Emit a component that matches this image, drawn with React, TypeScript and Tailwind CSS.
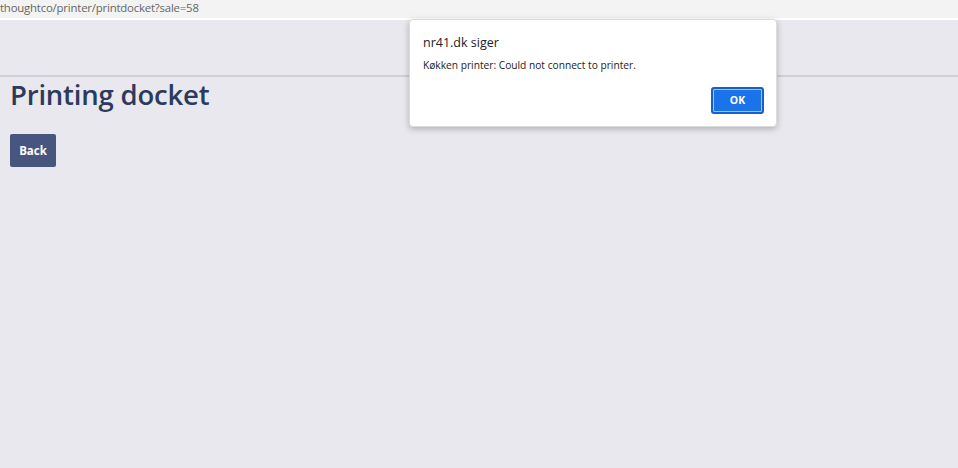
export default function App() {
  return (
    <div className="relative h-[468px] w-[958px] overflow-hidden bg-[#e8e8ee] font-['Open_Sans','Noto_Sans',sans-serif]">
      <div className="h-[20px] border-b-2 border-white bg-[#f3f3f3] text-[11.4px] leading-[16px] tracking-[-0.2px] text-[#666]">
        thoughtco/printer/printdocket?sale=58
      </div>
      <div className="h-[57px] border-b-2 border-[#cfcfd4]" />
      <div className="px-[10px]">
        <h1 className="text-[27.5px] font-semibold leading-[36px] tracking-[-0.2px] text-[#2d3a5c]">Printing docket</h1>
        <button className="mt-[21px] h-[33px] w-[46px] rounded-[2px] bg-[#48557e] text-[11.5px] font-bold text-white">
          Back
        </button>
      </div>

      <div className="absolute left-[409px] top-[19px] h-[108px] w-[368px] rounded-[4px] border border-[#dcdcdc] bg-white shadow-[0_2px_6px_rgba(0,0,0,0.25)]">
        <div className="px-[13px] pt-[14px] text-[12.5px] leading-[18px] text-[#222]">nr41.dk siger</div>
        <div className="mt-[6px] px-[13px] text-[10.2px] leading-[14px] text-[#222]">
          Køkken printer: Could not connect to printer.
        </div>
        <div className="flex justify-end pr-[12px] pt-[15px]">
          <button className="h-[27px] w-[53px] rounded-[3px] border-2 border-[#1a5fc4] bg-[#1a73e8] text-[10.5px] font-bold text-white shadow-[inset_0_0_0_1px_#9cc3f5]">
            OK
          </button>
        </div>
      </div>
    </div>
  );
}
